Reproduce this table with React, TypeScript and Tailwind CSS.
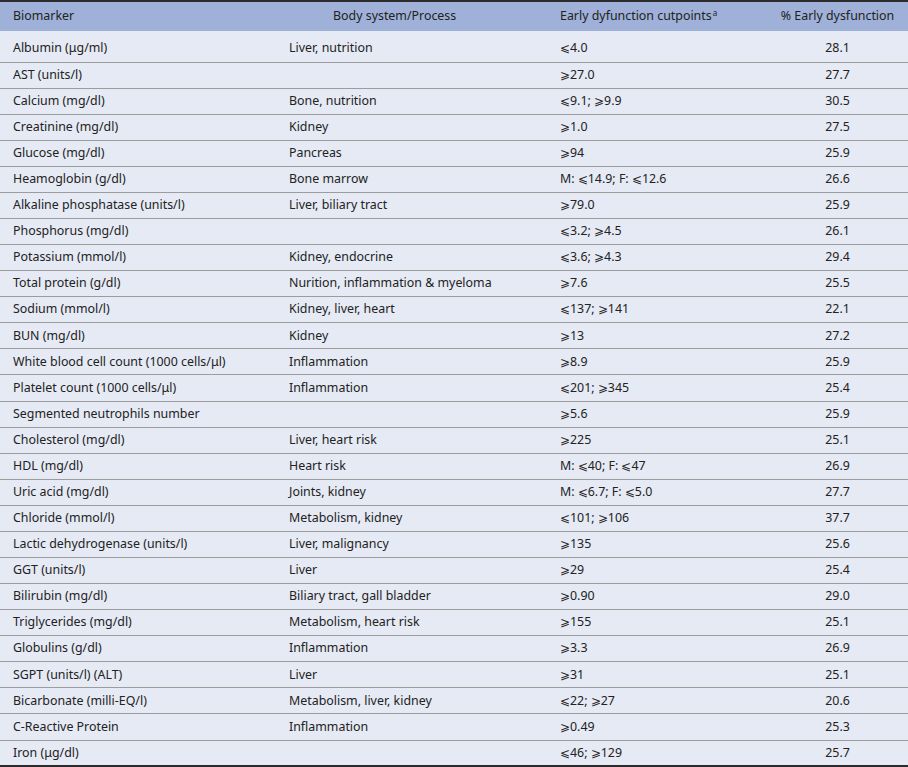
const rows: [string, string, string, string][] = [
  ["Albumin (μg/ml)", "Liver, nutrition", "⩽4.0", "28.1"],
  ["AST (units/l)", "", "⩾27.0", "27.7"],
  ["Calcium (mg/dl)", "Bone, nutrition", "⩽9.1; ⩾9.9", "30.5"],
  ["Creatinine (mg/dl)", "Kidney", "⩾1.0", "27.5"],
  ["Glucose (mg/dl)", "Pancreas", "⩾94", "25.9"],
  ["Heamoglobin (g/dl)", "Bone marrow", "M: ⩽14.9; F: ⩽12.6", "26.6"],
  ["Alkaline phosphatase (units/l)", "Liver, biliary tract", "⩾79.0", "25.9"],
  ["Phosphorus (mg/dl)", "", "⩽3.2; ⩾4.5", "26.1"],
  ["Potassium (mmol/l)", "Kidney, endocrine", "⩽3.6; ⩾4.3", "29.4"],
  ["Total protein (g/dl)", "Nurition, inflammation & myeloma", "⩾7.6", "25.5"],
  ["Sodium (mmol/l)", "Kidney, liver, heart", "⩽137; ⩾141", "22.1"],
  ["BUN (mg/dl)", "Kidney", "⩾13", "27.2"],
  ["White blood cell count (1000 cells/μl)", "Inflammation", "⩾8.9", "25.9"],
  ["Platelet count (1000 cells/μl)", "Inflammation", "⩽201; ⩾345", "25.4"],
  ["Segmented neutrophils number", "", "⩾5.6", "25.9"],
  ["Cholesterol (mg/dl)", "Liver, heart risk", "⩾225", "25.1"],
  ["HDL (mg/dl)", "Heart risk", "M: ⩽40; F: ⩽47", "26.9"],
  ["Uric acid (mg/dl)", "Joints, kidney", "M: ⩽6.7; F: ⩽5.0", "27.7"],
  ["Chloride (mmol/l)", "Metabolism, kidney", "⩽101; ⩾106", "37.7"],
  ["Lactic dehydrogenase (units/l)", "Liver, malignancy", "⩾135", "25.6"],
  ["GGT (units/l)", "Liver", "⩾29", "25.4"],
  ["Bilirubin (mg/dl)", "Biliary tract, gall bladder", "⩾0.90", "29.0"],
  ["Triglycerides (mg/dl)", "Metabolism, heart risk", "⩾155", "25.1"],
  ["Globulins (g/dl)", "Inflammation", "⩾3.3", "26.9"],
  ["SGPT (units/l) (ALT)", "Liver", "⩾31", "25.1"],
  ["Bicarbonate (milli-EQ/l)", "Metabolism, liver, kidney", "⩽22; ⩾27", "20.6"],
  ["C-Reactive Protein", "Inflammation", "⩾0.49", "25.3"],
  ["Iron (μg/dl)", "", "⩽46; ⩾129", "25.7"],
];

export default function App() {
  return (
    <div className="w-[908px] h-[767px] bg-white text-[12.4px] text-[#222] font-['Noto_Sans',sans-serif]">
      <table className="w-full border-collapse table-fixed">
        <colgroup>
          <col className="w-[280px]" />
          <col className="w-[271px]" />
          <col className="w-[216px]" />
          <col />
        </colgroup>
        <thead>
          <tr className="h-[30px] bg-[#9fb1d8] border-t-2 border-[#2b2b2b]">
            <th className="pl-[13px] text-left font-normal">Biomarker</th>
            <th className="pl-[53px] text-left font-normal">Body system/Process</th>
            <th className="pl-[9px] text-left font-normal">
              Early dyfunction cutpoints<sup className="text-[8px] ml-px">a</sup>
            </th>
            <th className="text-center font-normal">% Early dysfunction</th>
          </tr>
        </thead>
        <tbody>
          {rows.map((r, i) => {
            const first = i === 0;
            const last = i === rows.length - 1;
            return (
              <tr
                key={i}
                className={`bg-[#e6eaf5] ${first ? "h-[31px]" : "h-[26.09px]"} ${
                  last ? "border-b-2 border-[#2b2b2b]" : "border-b border-[#9c9c9c]"
                }`}
              >
                <td className={`pl-[13px] whitespace-nowrap ${first ? "pt-[5px]" : ""}`}>{r[0]}</td>
                <td className={`pl-[9px] whitespace-nowrap ${first ? "pt-[5px]" : ""}`}>{r[1]}</td>
                <td className={`pl-[9px] whitespace-nowrap ${first ? "pt-[5px]" : ""}`}>{r[2]}</td>
                <td className={`text-center ${first ? "pt-[5px]" : ""}`}>{r[3]}</td>
              </tr>
            );
          })}
        </tbody>
      </table>
    </div>
  );
}
